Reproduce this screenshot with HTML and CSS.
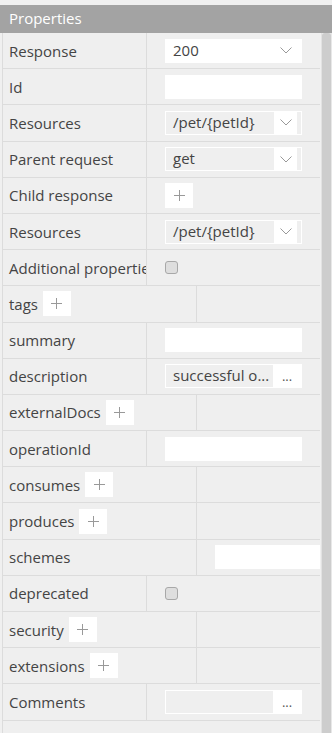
FILE: index.html
```html
<!DOCTYPE html>
<html lang="en">

<head>
    <meta charset="UTF-8">
    <meta name="viewport" content="width=device-width, initial-scale=1.0">
    <title>Properties</title>
    <link rel="stylesheet" href="styles.css">
</head>

<body>
    <div class="panel">
        <div class="panel-head">Properties</div>

        <div class="panel-body">
            <div class="grid">
                <div class="row">
                    <div class="label">Response</div>
                    <div class="value">
                        <div class="select plain"><span class="text">200</span><span class="arrow"><svg width="12" height="7" viewBox="0 0 12 7"><polyline points="0.5,0.5 6,6 11.5,0.5" /></svg></span></div>
                    </div>
                </div>
                <div class="row">
                    <div class="label">Id</div>
                    <div class="value"><input class="field" type="text"></div>
                </div>
                <div class="row">
                    <div class="label">Resources</div>
                    <div class="value">
                        <div class="select"><span class="text">/pet/{petId}</span><span class="arrow"><svg width="12" height="7" viewBox="0 0 12 7"><polyline points="0.5,0.5 6,6 11.5,0.5" /></svg></span></div>
                    </div>
                </div>
                <div class="row">
                    <div class="label">Parent request</div>
                    <div class="value">
                        <div class="select"><span class="text">get</span><span class="arrow"><svg width="12" height="7" viewBox="0 0 12 7"><polyline points="0.5,0.5 6,6 11.5,0.5" /></svg></span></div>
                    </div>
                </div>
                <div class="row">
                    <div class="label">Child response</div>
                    <div class="value"><button class="add"><svg width="11" height="11" viewBox="0 0 11 11"><path d="M5.5 0v11M0 5.5h11" /></svg></button></div>
                </div>
                <div class="row">
                    <div class="label">Resources</div>
                    <div class="value">
                        <div class="select"><span class="text">/pet/{petId}</span><span class="arrow"><svg width="12" height="7" viewBox="0 0 12 7"><polyline points="0.5,0.5 6,6 11.5,0.5" /></svg></span></div>
                    </div>
                </div>
                <div class="row">
                    <div class="label">Additional properties</div>
                    <div class="value"><input class="check" type="checkbox"></div>
                </div>
                <div class="row wide">
                    <div class="label">tags <button class="add"><svg width="11" height="11" viewBox="0 0 11 11"><path d="M5.5 0v11M0 5.5h11" /></svg></button></div>
                    <div class="value"></div>
                </div>
                <div class="row">
                    <div class="label">summary</div>
                    <div class="value"><input class="field" type="text"></div>
                </div>
                <div class="row">
                    <div class="label">description</div>
                    <div class="value">
                        <div class="dialog"><span class="text">successful o...</span><span class="dots">...</span></div>
                    </div>
                </div>
                <div class="row wide">
                    <div class="label">externalDocs <button class="add"><svg width="11" height="11" viewBox="0 0 11 11"><path d="M5.5 0v11M0 5.5h11" /></svg></button></div>
                    <div class="value"></div>
                </div>
                <div class="row">
                    <div class="label">operationId</div>
                    <div class="value"><input class="field" type="text"></div>
                </div>
                <div class="row wide">
                    <div class="label">consumes <button class="add"><svg width="11" height="11" viewBox="0 0 11 11"><path d="M5.5 0v11M0 5.5h11" /></svg></button></div>
                    <div class="value"></div>
                </div>
                <div class="row wide">
                    <div class="label">produces <button class="add"><svg width="11" height="11" viewBox="0 0 11 11"><path d="M5.5 0v11M0 5.5h11" /></svg></button></div>
                    <div class="value"></div>
                </div>
                <div class="row wide">
                    <div class="label">schemes</div>
                    <div class="value"><input class="field open" type="text"></div>
                </div>
                <div class="row">
                    <div class="label">deprecated</div>
                    <div class="value"><input class="check" type="checkbox"></div>
                </div>
                <div class="row wide">
                    <div class="label">security <button class="add"><svg width="11" height="11" viewBox="0 0 11 11"><path d="M5.5 0v11M0 5.5h11" /></svg></button></div>
                    <div class="value"></div>
                </div>
                <div class="row wide">
                    <div class="label">extensions <button class="add"><svg width="11" height="11" viewBox="0 0 11 11"><path d="M5.5 0v11M0 5.5h11" /></svg></button></div>
                    <div class="value"></div>
                </div>
                <div class="row">
                    <div class="label">Comments</div>
                    <div class="value">
                        <div class="dialog"><span class="text"></span><span class="dots">...</span></div>
                    </div>
                </div>
                <div class="row empty"></div>
            </div>

            <div class="scroll"><div class="thumb"></div></div>
        </div>
    </div>
</body>

</html>
```

FILE: styles.css
```css
body {
    margin: 0;
    background-color: #f0f0f0;
    font-family: "Open Sans", "Liberation Sans", sans-serif;
    font-size: 15px;
    color: #444;
    overflow: hidden;
}

.panel {
    width: 332px;
    padding-top: 5px;
}

.panel-head {
    height: 28px;
    line-height: 27px;
    padding-left: 9px;
    background-color: #a3a3a3;
    color: #fff;
    font-size: 15px;
}

.panel-body {
    display: flex;
    height: 700px;
    overflow: hidden;
}

.grid {
    width: 318px;
    margin-left: 2px;
    border-left: 1px solid #dcdcdc;
    background-color: #efefef;
}

.row {
    display: flex;
    height: 36.2px;
    box-sizing: border-box;
    border-bottom: 1px solid #dcdcdc;
}

.label {
    width: 144px;
    flex: none;
    box-sizing: border-box;
    padding-left: 6px;
    display: flex;
    align-items: center;
    gap: 5px;
    border-right: 1px solid #dcdcdc;
    white-space: nowrap;
    overflow: hidden;
}

.wide .label {
    width: 194px;
}

.value {
    flex: 1;
    display: flex;
    align-items: center;
    padding-left: 18px;
    min-width: 0;
}

.field {
    width: 137px;
    height: 24px;
    box-sizing: border-box;
    border: none;
    background-color: #fff;
    margin: 0;
}

.field.open {
    width: 105px;
}

.select,
.dialog {
    display: flex;
    width: 137px;
    height: 24px;
    box-sizing: border-box;
    border: 1px solid #fff;
    background-color: #efefef;
}

.select.plain {
    background-color: #fff;
}

.select .text,
.dialog .text {
    flex: 1;
    padding-left: 7px;
    line-height: 21px;
    white-space: nowrap;
    overflow: hidden;
}

.select .arrow {
    width: 23px;
    margin-right: 4px;
    background-color: #fff;
    display: flex;
    align-items: center;
    justify-content: center;
}

.select .arrow svg {
    fill: none;
    stroke: #999;
    stroke-width: 1;
}

.dialog .dots {
    width: 28px;
    background-color: #fff;
    text-align: center;
    line-height: 22px;
    font-size: 13px;
    color: #555;
}

.add {
    width: 28px;
    height: 25px;
    padding: 0;
    border: none;
    background-color: #fff;
    display: flex;
    align-items: center;
    justify-content: center;
    cursor: pointer;
}

.add svg {
    stroke: #999;
    stroke-width: 1;
    fill: none;
}

.check {
    appearance: none;
    width: 13px;
    height: 13px;
    margin: 0;
    border: 1px solid #a8a8a8;
    border-radius: 3px;
    background-color: #dedede;
}

.empty {
    border-bottom: none;
}

.scroll {
    width: 10px;
    margin-left: 1px;
    border-left: 1px solid #e2e2e2;
    background-color: #e8e8e8;
}

.thumb {
    width: 9px;
    height: 100%;
    background-color: #cdcdcd;
    border-radius: 3px 3px 0 0;
}
```
